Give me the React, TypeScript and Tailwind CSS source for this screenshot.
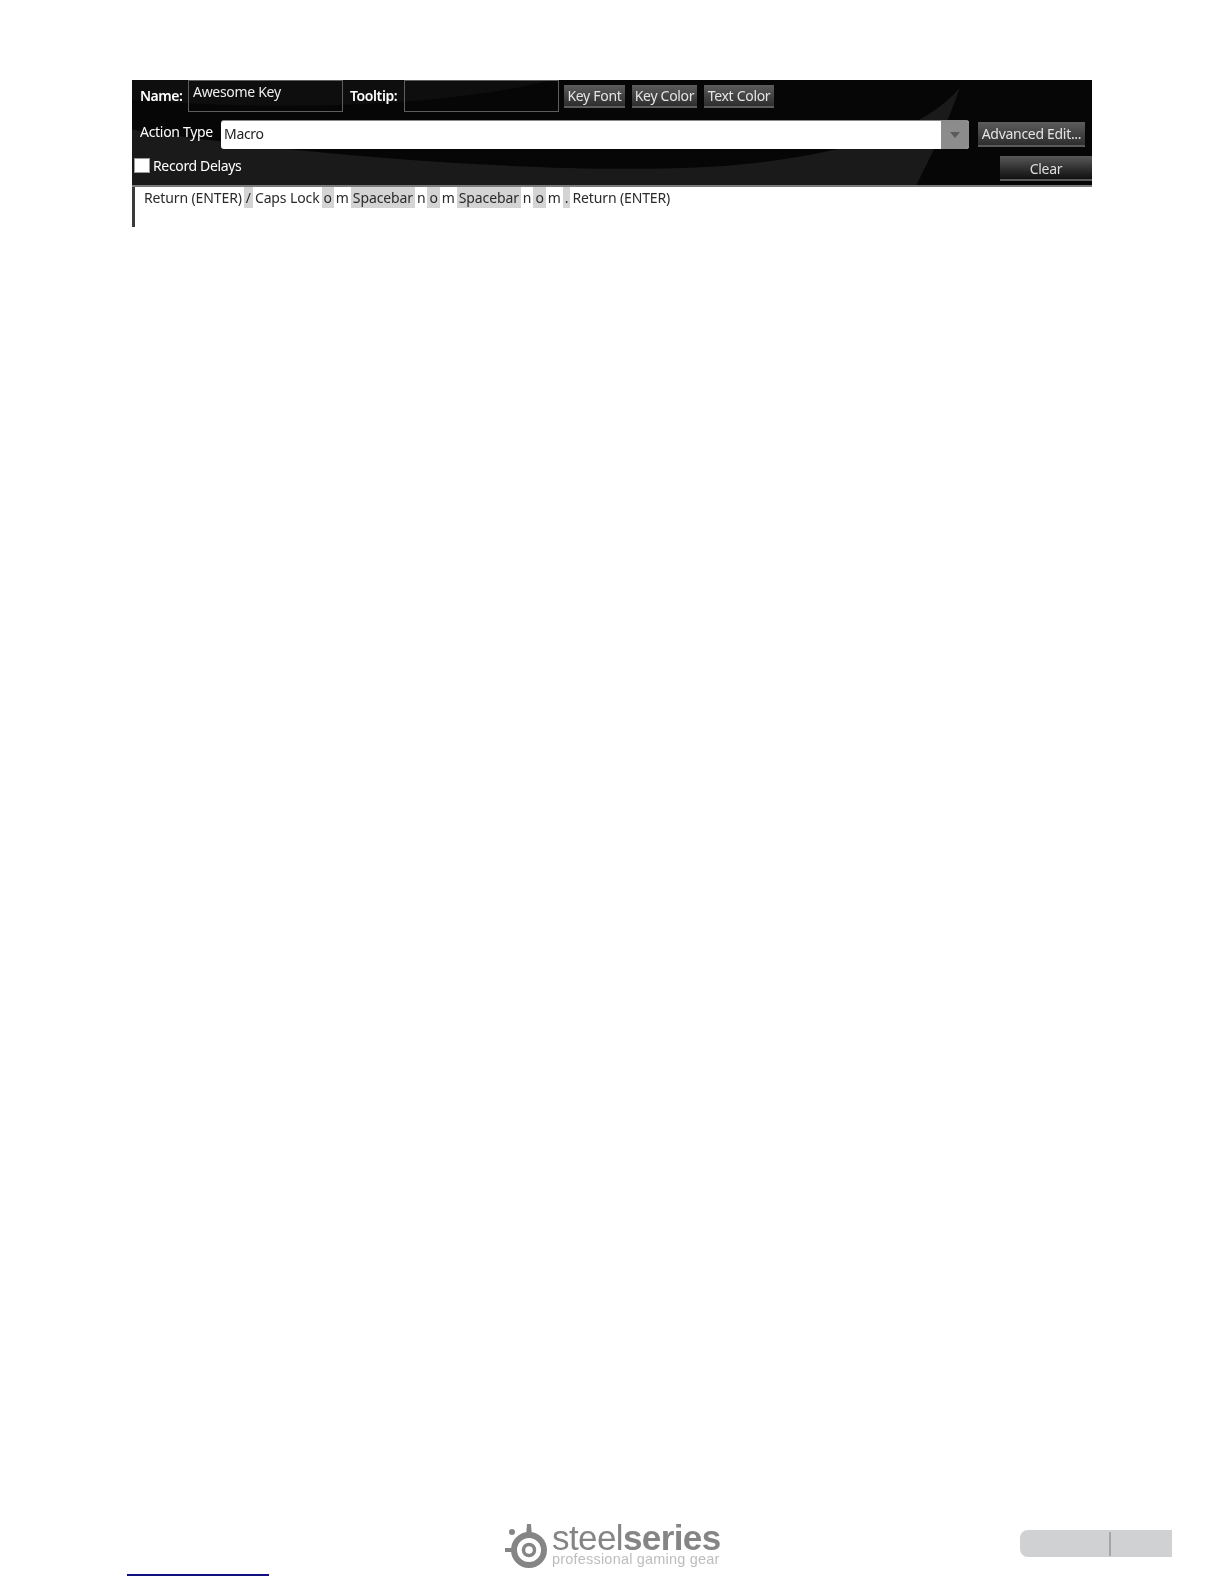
const font = "font-['Noto_Sans','Liberation_Sans',sans-serif]";

const DarkButton = ({ label, className }: { label: string; className: string }) => (
  <button className={`flex items-center justify-center border-b-2 border-[#5a5a5a] bg-gradient-to-b from-[#5c5c5c] to-[#2e2e2e] text-[14px] tracking-[-0.3px] text-[#e4e4e4] ${className}`}>
    {label}
  </button>
);

const Hl = ({ children }: { children: string }) => <span className="bg-[#d4d4d4] px-[2px]">{children}</span>;

const Logo = () => (
  <div className="flex items-start text-[#858585] font-['Liberation_Sans',sans-serif]">
    <svg viewBox="0 0 48 48" className="h-[48px] w-[48px]">
      <circle cx="27" cy="27" r="15" fill="none" stroke="#858585" strokeWidth="6" />
      <circle cx="27" cy="27" r="5.5" fill="none" stroke="#858585" strokeWidth="3.5" />
      <path d="M25 1h4l1 12h-6zM3 25h8v4H3z" fill="#858585" />
      <circle cx="10" cy="9" r="3" fill="#858585" />
    </svg>
    <div className="ml-[2px] flex flex-col">
      <div className="h-[29px] text-[35px] leading-[29px] tracking-[-0.6px]">
        steel<span className="font-bold">series</span>
      </div>
      <div className="h-[15px] whitespace-nowrap text-[14.5px] leading-[15px] tracking-[0.2px] text-[#bdbdbd]">professional gaming gear</div>
    </div>
  </div>
);

export default function App() {
  return (
    <div className={`${font} flex h-[1584px] flex-col justify-between bg-white pl-[132px] pr-[132px] pt-[80px] blur-[0.3px]`}>
      <div className="w-[960px]">
        <div className="relative flex h-[107px] flex-col overflow-hidden border-b-2 border-[#7a7a7a] bg-[#040404]">
          <svg viewBox="0 0 958 106" preserveAspectRatio="none" className="absolute inset-0 h-full w-full">
            <path d="M0 0H958V106H0Z" fill="#060606" />
            <path d="M0 0H420C300 30 130 30 0 20Z" fill="#0e0e0e" />
            <path d="M0 50C200 80 480 100 620 84 720 72 790 50 826 8 812 50 795 80 783 106H0Z" fill="#1a1a1a" />
          </svg>
          <div className="relative flex h-[39px] items-start text-[14px] text-white">
            <span className="ml-[8px] mt-[5px] w-[48px] font-semibold tracking-[-0.5px]">Name:</span>
            <div className="h-[32px] w-[155px] border border-[#5e5e5e] pl-[4px] tracking-[-0.3px] text-[#eeeeee]">Awesome Key</div>
            <span className="ml-[7px] mt-[5px] w-[54px] font-semibold tracking-[-0.4px]">Tooltip:</span>
            <div className="h-[32px] w-[155px] border border-[#5e5e5e]" />
            <div className="ml-[5px] mt-[5px] flex gap-[7px]">
              <DarkButton label="Key Font" className="h-[23px] w-[61px]" />
              <DarkButton label="Key Color" className="h-[23px] w-[65px]" />
              <DarkButton label="Text Color" className="h-[23px] w-[70px]" />
            </div>
          </div>
          <div className="relative flex h-[30px] items-center text-[14px] text-white">
            <span className="mb-[5px] ml-[8px] w-[81px] tracking-[-0.3px]">Action Type</span>
            <div className="flex h-[29px] w-[748px] overflow-hidden rounded-[3px] border-t border-[#8a8a8a] bg-white">
              <span className="flex-1 pl-[3px] pt-[2px] tracking-[-0.3px] text-[#222222]">Macro</span>
              <div className="flex w-[28px] items-center justify-center bg-[#8c8c8c]">
                <svg viewBox="0 0 10 6" className="h-[6px] w-[10px]"><path d="M0 0H10L5 6Z" fill="#5a5a5a" /></svg>
              </div>
            </div>
            <DarkButton label="Advanced Edit..." className="ml-[9px] h-[25px] w-[107px]" />
          </div>
          <div className="relative flex flex-1 items-center text-[14px] text-white">
            <div className="mb-[3px] ml-[2px] h-[15px] w-[16px] border border-[#9a9a9a] bg-white" />
            <span className="mb-[3px] ml-[3px] tracking-[-0.35px]">Record Delays</span>
            <button className="ml-auto mt-[2px] h-[25px] w-[92px] border-b-2 border-[#5a5a5a] bg-gradient-to-b from-[#5a5a5a] to-[#111111] pt-[2px] text-[14px] tracking-[-0.3px] text-[#dddddd]">
              Clear
            </button>
          </div>
        </div>
        <div className="flex h-[40px] items-start gap-[2px] whitespace-pre border-l-[3px] border-[#3a3a3a] pl-[9px] text-[14px] tracking-[-0.12px] text-[#2a2a2a]">
          <span>Return (ENTER)</span>
          <Hl>/</Hl>
          <span>Caps Lock</span>
          <Hl>o</Hl>
          <span>m</span>
          <Hl>Spacebar</Hl>
          <span>n</span>
          <Hl>o</Hl>
          <span>m</span>
          <Hl>Spacebar</Hl>
          <span>n</span>
          <Hl>o</Hl>
          <span>m</span>
          <Hl>.</Hl>
          <span>Return (ENTER)</span>
        </div>
      </div>

      <div className="relative flex h-[62px] items-start justify-between">
        <div className="mb-[8px] mt-auto h-[2px] w-[142px] -translate-x-[5px] bg-[#101080]" />
        <div className="absolute left-[370px] top-[1px]">
          <Logo />
        </div>
        <div className="mr-[-80px] mt-[8px] flex h-[27px] w-[152px] items-center rounded-l-[8px] bg-[#d0d1d2]">
          <div className="ml-[89px] h-[24px] w-[2px] bg-[#a5a6a8]" />
        </div>
      </div>
    </div>
  );
}
